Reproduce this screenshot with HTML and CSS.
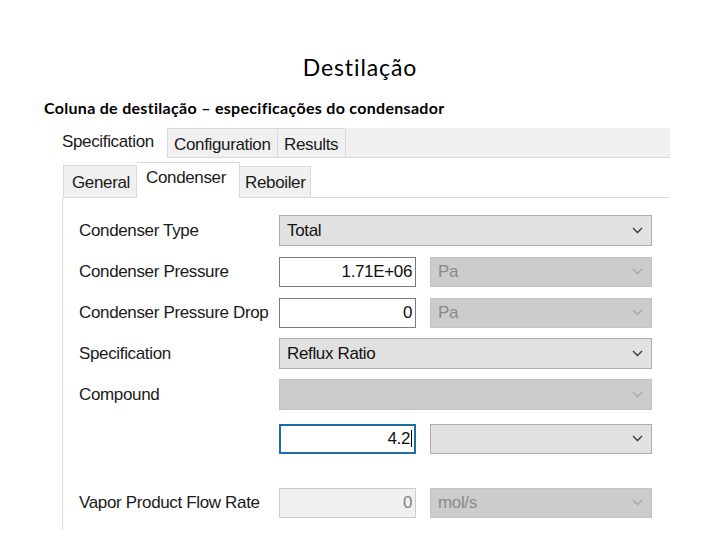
FILE: index.html
```html
<!DOCTYPE html>
<html lang="pt">
<head>
<meta charset="utf-8">
<title>Destilação</title>
<link rel="stylesheet" href="styles.css">
</head>
<body>
<h1 class="title">Destilação</h1>
<p class="subtitle">Coluna de destilação – especificações do condensador</p>
<div class="window">
  <div class="otabs">
    <div class="otab sel">Specification</div>
    <div class="otab cfg">Configuration</div>
    <div class="otab res">Results</div>
    <div class="ofill"></div>
  </div>
  <div class="itabs">
    <div class="itab gen">General</div>
    <div class="itab sel">Condenser</div>
    <div class="itab reb">Reboiler</div>
  </div>
  <div class="panel">
    <div class="row">
      <div class="label">Condenser Type</div>
      <div class="combo full"><span>Total</span><svg class="chev" width="11" height="7" viewBox="0 0 11 7"><polyline points="1,1 5.5,5.5 10,1"/></svg></div>
    </div>
    <div class="row">
      <div class="label">Condenser Pressure</div>
      <div class="tbox">1.71E+06</div>
      <div class="combo unit disabled"><span>Pa</span><svg class="chev" width="11" height="7" viewBox="0 0 11 7"><polyline points="1,1 5.5,5.5 10,1"/></svg></div>
    </div>
    <div class="row">
      <div class="label">Condenser Pressure Drop</div>
      <div class="tbox">0</div>
      <div class="combo unit disabled"><span>Pa</span><svg class="chev" width="11" height="7" viewBox="0 0 11 7"><polyline points="1,1 5.5,5.5 10,1"/></svg></div>
    </div>
    <div class="row">
      <div class="label">Specification</div>
      <div class="combo full"><span>Reflux Ratio</span><svg class="chev" width="11" height="7" viewBox="0 0 11 7"><polyline points="1,1 5.5,5.5 10,1"/></svg></div>
    </div>
    <div class="row">
      <div class="label">Compound</div>
      <div class="combo full disabled"><span></span><svg class="chev" width="11" height="7" viewBox="0 0 11 7"><polyline points="1,1 5.5,5.5 10,1"/></svg></div>
    </div>
    <div class="row r6">
      <div class="label"></div>
      <div class="tbox focus">4.2<span class="caret"></span></div>
      <div class="combo unit"><span></span><svg class="chev" width="11" height="7" viewBox="0 0 11 7"><polyline points="1,1 5.5,5.5 10,1"/></svg></div>
    </div>
    <div class="row r7">
      <div class="label">Vapor Product Flow Rate</div>
      <div class="tbox off">0</div>
      <div class="combo unit disabled"><span>mol/s</span><svg class="chev" width="11" height="7" viewBox="0 0 11 7"><polyline points="1,1 5.5,5.5 10,1"/></svg></div>
    </div>
  </div>
</div>
</body>
</html>
```
FILE: styles.css
```css
html, body {
  margin: 0;
  padding: 0;
  background: #ffffff;
}
body {
  width: 720px;
  height: 540px;
  overflow: hidden;
  font-family: "Liberation Sans", Arial, sans-serif;
  font-variant-ligatures: none;
  color: #000;
}
.title {
  margin: 53px 0 0 0;
  font-family: Lato, "Open Sans", sans-serif;
  font-weight: 400;
  font-size: 23px;
  letter-spacing: 0.9px;
  line-height: 28px;
  text-align: center;
  color: #000;
}
.subtitle {
  margin: 17px 0 0 0;
  padding-left: 44px;
  font-family: Lato, "Open Sans", sans-serif;
  font-weight: 700;
  font-size: 16px;
  letter-spacing: 0.3px;
  line-height: 20px;
  color: #000;
}
.window {
  margin: 10px 0 0 60px;
  width: 610px;
  font-size: 17px;
  letter-spacing: -0.35px;
  color: #1a1a1a;
}
.otabs {
  display: flex;
  height: 30px;
}
.otab {
  box-sizing: border-box;
  height: 30px;
  display: flex;
  align-items: center;
  background: #f0f0f0;
  border: 1px solid #dadada;
  border-left: none;
  padding-left: 6px;
  padding-top: 3px;
}
.otab.sel {
  width: 107px;
  background: #ffffff;
  border: none;
  padding-left: 2px;
  padding-top: 0;
  padding-bottom: 2px;
}
.otab.cfg {
  width: 111px;
  border-left: 1px solid #dadada;
}
.otab.res {
  width: 68px;
}
.ofill {
  flex: 1;
  box-sizing: border-box;
  height: 30px;
  background: #f0f0f0;
  border-bottom: 1px solid #d9d9d9;
}
.itabs {
  display: flex;
  align-items: flex-end;
  margin: 4px 0 0 2px;
  padding-left: 1px;
  height: 35px;
  border-bottom: 1px solid #d9d9d9;
}
.itab {
  box-sizing: border-box;
  display: flex;
  align-items: center;
  background: #f0f0f0;
  border: 1px solid #d9d9d9;
  border-bottom: none;
}
.itab.gen {
  width: 74px;
  height: 32px;
  padding: 2px 0 0 8px;
}
.itab.sel {
  width: 103px;
  height: 36px;
  margin-bottom: -1px;
  background: #ffffff;
  border-left: none;
  padding: 0 0 6px 9px;
}
.itab.reb {
  width: 71px;
  height: 31px;
  border-left: none;
  padding: 2px 0 0 5px;
}
.panel {
  margin-left: 2px;
  height: 332px;
  border-left: 1px solid #d9d9d9;
  padding: 17px 0 0 16px;
  box-sizing: border-box;
}
.row {
  display: flex;
  align-items: center;
  height: 31px;
  margin-top: 10px;
}
.row:first-child {
  margin-top: 0;
}
.row.r6 {
  margin-top: 13px;
}
.row.r7 {
  margin-top: 33px;
}
.label {
  flex: 0 0 200px;
  white-space: nowrap;
  color: #1a1a1a;
}
.combo {
  box-sizing: border-box;
  height: 31px;
  display: flex;
  align-items: center;
  justify-content: space-between;
  background: #e1e1e1;
  border: 1px solid #adadad;
  padding: 0 8px 0 7px;
  color: #111;
}
.combo.full {
  width: 373px;
}
.combo.unit {
  width: 222px;
  height: 30px;
  margin-left: 14px;
}
.combo.disabled {
  background: #cccccc;
  border-color: #c2c2c2;
  color: #8a8a8a;
}
.chev {
  display: block;
  fill: none;
  stroke: #3a3a3a;
  stroke-width: 1.4;
}
.combo.disabled .chev {
  stroke: #a8a8a8;
}
.tbox {
  box-sizing: border-box;
  width: 137px;
  height: 30px;
  display: flex;
  align-items: center;
  justify-content: flex-end;
  background: #ffffff;
  border: 1px solid #7a7a7a;
  padding-right: 3px;
  color: #111;
}
.tbox.focus {
  border: 2px solid #1b6fa8;
  padding-right: 2px;
}
.tbox.off {
  background: #f0f0f0;
  border-color: #cccccc;
  color: #838383;
}
.caret {
  display: inline-block;
  width: 1px;
  height: 17px;
  margin-left: 1px;
  background: #000;
}
```
